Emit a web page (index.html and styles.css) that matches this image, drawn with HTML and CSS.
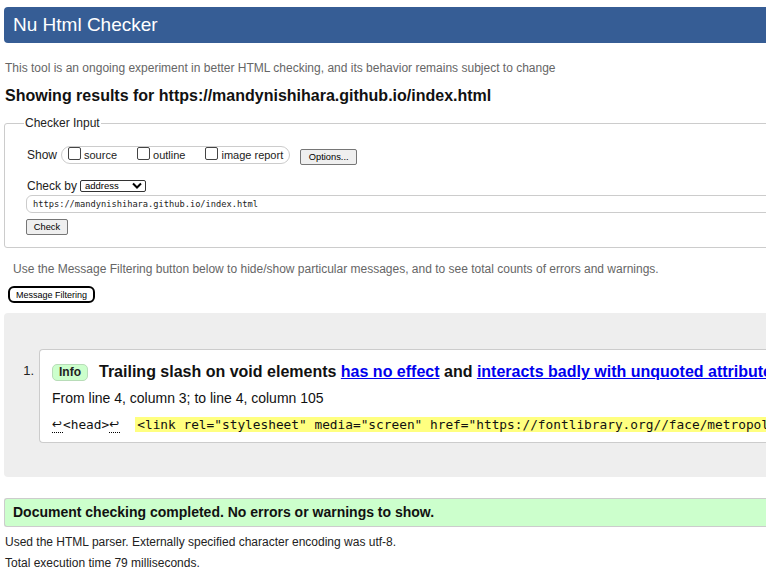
FILE: index.html
```html
<!DOCTYPE html>
<html lang="en">
<head>
<meta charset="utf-8">
<title>Nu Html Checker</title>
<link rel="stylesheet" href="styles.css">
</head>
<body>
<div class="page">
  <header class="topbar"><h1 class="brand">Nu Html Checker</h1></header>
  <p class="intro">This tool is an ongoing experiment in better HTML checking, and its behavior remains subject to change</p>
  <h2 class="results-title">Showing results for https://mandynishihara.github.io/index.html</h2>

  <fieldset class="checker">
    <legend class="checker-legend">Checker Input</legend>
    <div class="show-row">
      <span class="show-label">Show</span>
      <span class="opts">
        <span class="opt"><span class="cb"></span>source</span>
        <span class="opt"><span class="cb"></span>outline</span>
        <span class="opt"><span class="cb"></span>image report</span>
      </span>
      <span class="btn btn-options">Options...</span>
    </div>
    <div class="checkby-row">
      <span class="checkby-label">Check by</span>
      <span class="select">address
        <svg class="chev" width="10" height="7" viewBox="0 0 10 7"><polyline points="1,1.5 5,5.5 9,1.5" fill="none" stroke="#000" stroke-width="2"/></svg>
      </span>
    </div>
    <div class="url">https://mandynishihara.github.io/index.html</div>
    <span class="btn btn-check">Check</span>
  </fieldset>

  <p class="hint">Use the Message Filtering button below to hide/show particular messages, and to see total counts of errors and warnings.</p>
  <span class="filter-btn">Message Filtering</span>

  <section class="messages">
    <div class="msg-item">
      <span class="msg-num">1.</span>
      <div class="msg">
        <p class="msg-title"><span class="badge">Info</span><span class="msg-text">Trailing slash on void elements <a class="lnk" href="#">has no effect</a> and <a class="lnk" href="#">interacts badly with unquoted attribute values</a>.</span></p>
        <p class="msg-loc">From line 4, column 3; to line 4, column 105</p>
        <p class="msg-code"><span class="ret">↩</span>&lt;head&gt;<span class="ret">↩</span><span class="gap"></span><span class="hl">&lt;link rel="stylesheet" media="screen" href="https://fontlibrary.org//face/metropolis" type="text/css"/&gt;</span></p>
      </div>
    </div>
  </section>

  <p class="done">Document checking completed. No errors or warnings to show.</p>
  <p class="meta">Used the HTML parser. Externally specified character encoding was utf-8.</p>
  <p class="meta">Total execution time 79 milliseconds.</p>
</div>
</body>
</html>
```

FILE: styles.css
```css
html, body {
  margin: 0;
  padding: 0;
  overflow: hidden;
  background: #fff;
}
body {
  font-family: "Liberation Sans", Arial, sans-serif;
  color: #000;
}
.page {
  width: 1000px;
  padding: 7px 0 0 4px;
}
.topbar {
  height: 36px;
  background: #365d95;
  border-radius: 4px 0 0 4px;
  padding-left: 9px;
}
.brand {
  margin: 0;
  font-weight: normal;
  font-size: 19px;
  line-height: 36px;
  color: #fff;
}
.intro {
  margin: 18px 0 0 1px;
  font-size: 12px;
  line-height: 14px;
  color: #666;
}
.results-title {
  margin: 11px 0 0 1px;
  font-size: 16px;
  line-height: 19px;
  font-weight: bold;
  color: #111;
}
.checker {
  margin: 11px 0 0 0;
  padding: 16px 0 12px 21px;
  border: 1px solid #ccc;
  border-radius: 3px 0 0 3px;
}
.checker-legend {
  margin-left: -2px;
  padding: 0 1px;
  font-size: 12px;
  line-height: 14px;
  color: #222;
}
.show-row {
  display: flex;
  align-items: center;
  height: 18px;
  font-size: 12px;
}
.show-label {
  width: 34px;
  margin-left: 1px;
  color: #222;
}
.opts {
  display: flex;
  align-items: center;
  height: 16px;
  border: 1px solid #ccc;
  border-radius: 9px;
  padding: 0 6px;
  gap: 20px;
  font-size: 11px;
  color: #222;
}
.opt {
  display: flex;
  align-items: center;
  gap: 3px;
}
.cb {
  display: inline-block;
  width: 11px;
  height: 11px;
  border: 1px solid #444;
  border-radius: 2px;
  background: #fff;
  margin-top: -3px;
}
.btn {
  display: inline-flex;
  align-items: center;
  justify-content: center;
  box-sizing: border-box;
  height: 16px;
  border: 1px solid #767676;
  border-radius: 2px;
  background: #efefef;
  font-size: 9.3px;
  color: #000;
}
.btn-options {
  width: 57px;
  margin-left: 10px;
  margin-top: 3px;
}
.checkby-row {
  display: flex;
  align-items: center;
  height: 13px;
  margin-top: 15px;
  font-size: 12px;
}
.checkby-label {
  width: 53px;
  margin-left: 1px;
  color: #222;
}
.select {
  display: inline-flex;
  align-items: center;
  justify-content: space-between;
  box-sizing: border-box;
  width: 66px;
  height: 12px;
  border: 1px solid #333;
  border-radius: 2px;
  padding: 0 3px 0 4px;
  font-size: 9.5px;
}
.url {
  box-sizing: border-box;
  height: 18px;
  margin-top: 3px;
  border: 1px solid #ccc;
  border-radius: 6px;
  padding-left: 6px;
  font-family: "DejaVu Sans Mono", monospace;
  font-size: 8.7px;
  line-height: 16px;
  color: #222;
}
.btn-check {
  width: 42px;
  margin-top: 6px;
}
.hint {
  margin: 14px 0 0 9px;
  font-size: 12px;
  line-height: 14px;
  color: #666;
}
.filter-btn {
  display: inline-flex;
  align-items: center;
  justify-content: center;
  box-sizing: border-box;
  width: 87px;
  height: 17px;
  margin: 10px 0 0 4px;
  border: 2px solid #000;
  border-radius: 6px;
  font-size: 9px;
  background: #fff;
}
.messages {
  height: 164px;
  margin-top: 10px;
  box-sizing: border-box;
  padding: 36px 0 0 0;
  background: #eee;
  border-radius: 4px 0 0 4px;
}
.msg-item {
  display: flex;
}
.msg-num {
  width: 35px;
  box-sizing: border-box;
  padding: 14px 5px 0 0;
  text-align: right;
  font-size: 13px;
  line-height: 16px;
  color: #222;
}
.msg {
  flex: 1;
  height: 94px;
  box-sizing: border-box;
  border: 1px solid #ccc;
  border-right: 0;
  border-radius: 4px 0 0 4px;
  background: #fff;
  padding: 14px 0 0 12px;
  white-space: nowrap;
}
.msg p {
  margin: 0;
}
.msg-title {
  display: flex;
  align-items: center;
  height: 16px;
}
.badge {
  box-sizing: border-box;
  width: 36px;
  height: 17px;
  line-height: 15px;
  text-align: center;
  border: 1px solid #b8dcb8;
  border-radius: 5px;
  background: #ccffcc;
  font-weight: bold;
  font-size: 12px;
  color: #222;
}
.msg-text {
  margin-left: 11px;
  font-weight: bold;
  font-size: 16px;
  line-height: 18px;
  color: #111;
}
.lnk {
  color: #00e;
  text-decoration: underline;
}
.msg-loc {
  margin-top: 10px !important;
  font-size: 14px;
  line-height: 16px;
  color: #111;
}
.msg-code {
  margin-top: 11px !important;
  font-family: "DejaVu Sans Mono", monospace;
  font-size: 12.8px;
  line-height: 16px;
  color: #111;
}
.ret {
  display: inline-block;
  width: 11px;
  font-family: "DejaVu Sans", sans-serif;
  font-size: 12px;
  line-height: 15px;
  border-bottom: 1px dotted #000;
  overflow: hidden;
  vertical-align: top;
}
.gap {
  display: inline-block;
  width: 15px;
}
.hl {
  background: #ffff80;
  padding: 0 2px;
}
.done {
  box-sizing: border-box;
  height: 29px;
  margin: 21px 0 0 0;
  border: 1px solid #ccc;
  border-right: 0;
  border-radius: 3px 0 0 3px;
  background: #ccffcc;
  padding-left: 8px;
  font-weight: bold;
  font-size: 14px;
  line-height: 27px;
  color: #111;
}
.meta {
  margin: 8px 0 0 1px;
  font-size: 12px;
  line-height: 14px;
  color: #222;
}
.meta + .meta {
  margin-top: 7px;
}
```
